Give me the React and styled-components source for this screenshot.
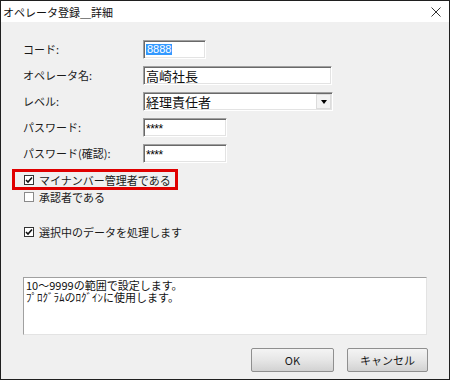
import styled, { createGlobalStyle } from "styled-components";

const GlobalStyle = createGlobalStyle`
  html, body {
    margin: 0;
    padding: 0;
    background: #fff;
  }
  body {
    font-family: "Noto Sans CJK JP", "Noto Sans", sans-serif;
    color: #000;
  }
`;

const JP = `"Noto Sans CJK JP", "Noto Sans", sans-serif`;

// ダイアログ全体
const Frame = styled.div`
  width: 450px;
  height: 380px;
  box-sizing: border-box;
  border: 1px solid #1f1f1f;
  background: #f0f0f0;
  display: flex;
  flex-direction: column;
`;

const TitleBar = styled.div`
  height: 21px;
  flex: none;
  background: #fff;
  display: flex;
  align-items: center;
  justify-content: space-between;
  padding: 0 8px 0 2px;
  font-family: ${JP};
  font-size: 11px;
  color: #111;
`;

const CloseIcon = styled.svg`
  width: 10px;
  height: 10px;
  display: block;
`;

const Body = styled.div`
  flex: 1;
  display: flex;
  flex-direction: column;
  padding: 18px 22px 0 22px;
`;

const Form = styled.div`
  display: grid;
  grid-template-columns: 120px auto;
  grid-auto-rows: 19px;
  row-gap: 7px;
  align-items: center;
`;

const Label = styled.div`
  font-size: 11px;
  line-height: 19px;
  color: #1a1a1a;
`;

const Field = styled.div`
  box-sizing: border-box;
  width: ${({ $w }) => $w}px;
  height: 19px;
  background: #fff;
  border-top: 1px solid #a0a0a0;
  border-left: 1px solid #a0a0a0;
  border-right: 1px solid #fff;
  border-bottom: 1px solid #fff;
  box-shadow: inset 1px 1px 0 #696969, inset -1px -1px 0 #e3e3e3;
  display: flex;
  align-items: center;
  padding-left: 2px;
`;

const Selected = styled.span`
  background: #3399ff;
  color: #fff;
  font-family: "Liberation Sans", Arial, sans-serif;
  font-size: 11px;
  line-height: 11px;
  padding: 0 1px;
`;

const Value = styled.span`
  font-size: 13px;
  line-height: 15px;
  color: #111;
`;

const Masked = styled.span`
  font-family: "Liberation Sans", Arial, sans-serif;
  font-size: 12px;
  line-height: 12px;
  padding-top: 3px;
  letter-spacing: -0.5px;
`;

const DropButton = styled.div`
  margin-left: auto;
  margin-right: 1px;
  width: 15px;
  height: 15px;
  box-sizing: border-box;
  border: 1px solid #dcdcdc;
  background: #f3f3f3;
  display: flex;
  align-items: center;
  justify-content: center;
  &::after {
    content: "";
    border-left: 3.5px solid transparent;
    border-right: 3.5px solid transparent;
    border-top: 4px solid #000;
  }
`;

const Checks = styled.div`
  display: flex;
  flex-direction: column;
  margin-top: 6px;
`;

const Highlight = styled.div`
  margin-left: -11px;
  width: 166px;
  height: 21px;
  box-sizing: border-box;
  border: 3px solid #e00000;
  display: flex;
  align-items: center;
  padding-left: 9px;
`;

const CheckRow = styled.div`
  display: flex;
  align-items: center;
  height: 14px;
  padding-left: ${({ $inset }) => ($inset ? 0 : 1)}px;
  margin-top: ${({ $gap }) => $gap || 0}px;
  gap: 5px;
  font-size: 11px;
  color: #1a1a1a;
`;

const Box = styled.div`
  width: 10px;
  height: 10px;
  box-sizing: border-box;
  border: 1px solid ${({ $on }) => ($on ? "#333" : "#8a8a8a")};
  background: #fff;
  display: flex;
  align-items: center;
  justify-content: center;
`;

const Memo = styled.div`
  margin-top: 38px;
  height: 58px;
  box-sizing: border-box;
  background: #fff;
  border-top: 1px solid #a0a0a0;
  border-left: 1px solid #a0a0a0;
  border-right: 1px solid #e3e3e3;
  border-bottom: 1px solid #e3e3e3;
  padding: 1px 2px;
  font-size: 11px;
  line-height: 12px;
  color: #111;
  white-space: pre;
`;

const Buttons = styled.div`
  display: flex;
  justify-content: flex-end;
  gap: 13px;
  margin-top: 13px;
  margin-right: -1px;
`;

const Button = styled.button`
  width: ${({ $w }) => $w}px;
  height: 24px;
  box-sizing: border-box;
  border: 1px solid #8f8f8f;
  border-radius: 2px;
  background: linear-gradient(to bottom, #f4f4f4 0%, #e6e6e6 50%, #d2d2d2 100%);
  font-family: ${JP};
  font-size: 11px;
  color: #1a1a1a;
  padding: 0;
`;

const CheckBox = ({ on }) => (
  <Box $on={on}>
    {on && (
      <svg width="8" height="8" viewBox="0 0 8 8">
        <path d="M1 4 L3 6 L7 1.5" fill="none" stroke="#111" strokeWidth="1.6" />
      </svg>
    )}
  </Box>
);

const App = () => {
  return (
    <>
      <GlobalStyle />
      <Frame>
        <TitleBar>
          <span>オペレータ登録＿詳細</span>
          <CloseIcon viewBox="0 0 10 10">
            <path d="M0.5 0.5 L9.5 9.5 M9.5 0.5 L0.5 9.5" stroke="#333" strokeWidth="1" />
          </CloseIcon>
        </TitleBar>
        <Body>
          <Form>
            <Label>コード:</Label>
            <Field $w={63}>
              <Selected>8888</Selected>
            </Field>
            <Label>オペレータ名:</Label>
            <Field $w={189}>
              <Value>高崎社長</Value>
            </Field>
            <Label>レベル:</Label>
            <Field $w={190}>
              <Value>経理責任者</Value>
              <DropButton />
            </Field>
            <Label>パスワード:</Label>
            <Field $w={84}>
              <Masked>****</Masked>
            </Field>
            <Label>パスワード(確認):</Label>
            <Field $w={84}>
              <Masked>****</Masked>
            </Field>
          </Form>
          <Checks>
            <Highlight>
              <CheckRow $inset>
                <CheckBox on />
                マイナンバー管理者である
              </CheckRow>
            </Highlight>
            <CheckRow>
              <CheckBox />
              承認者である
            </CheckRow>
            <CheckRow $gap={21}>
              <CheckBox on />
              選択中のデータを処理します
            </CheckRow>
          </Checks>
          <Memo>{"10～9999の範囲で設定します。\nﾌﾟﾛｸﾞﾗﾑのﾛｸﾞｲﾝに使用します。"}</Memo>
          <Buttons>
            <Button $w={83}>OK</Button>
            <Button $w={81}>キャンセル</Button>
          </Buttons>
        </Body>
      </Frame>
    </>
  );
};

export default App;
